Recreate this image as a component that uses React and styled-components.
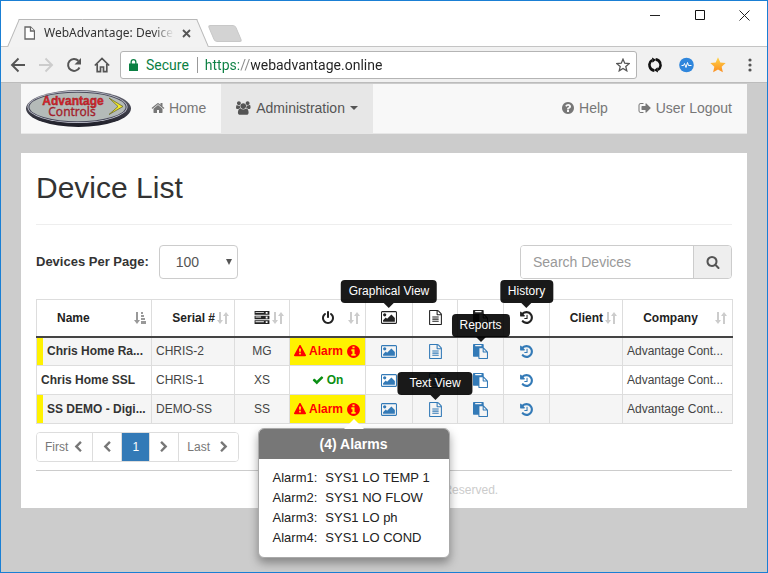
import React, { useState } from 'react';
import styled, { createGlobalStyle, css } from 'styled-components';

const linkBlue = '#337ab7';
const alarmRed = '#ff0000';
const alarmYellow = '#fff200';
const lineGrey = '#dddddd';

const GlobalStyle = createGlobalStyle`
* { box-sizing: border-box; }
body {
  margin: 0;
  background-color: #cccccc;
  color: #333333;
  font-family: "Liberation Sans", Arial, sans-serif;
  font-size: 14px;
  line-height: 20px;
}
button, input, select { font: inherit; color: inherit; }
button { cursor: pointer; }
`;

// icon outlines, [viewBox, path]
const disc = 'q0 209-103 385.5t-279.5 279.5-385.5 103-385.5-103-279.5-279.5-103-385.5 103-385.5 279.5-279.5 385.5-103 385.5 103 279.5 279.5 103 385.5z';
const icons = {
  home: ['0 0 1792 1792', 'M1472 992v480q0 26-19 45t-45 19h-384v-384h-256v384h-384q-26 0-45-19t-19-45v-480q0-1 .5-3t.5-3l575-474 575 474q1 2 1 6zm223-69l-62 74q-8 9-21 11h-3q-13 0-21-7l-692-577-692 577q-12 8-24 7-13-2-21-11l-62-74q-8-10-7-23.5t11-21.5l719-599q32-26 76-26t76 26l244 204v-195q0-14 9-23t23-9h192q14 0 23 9t9 23v408l219 182q10 8 11 21.5t-7 23.5z'],
  users: ['-64 0 1984 1792', 'M529 896q-162 5-265 128h-134q-82 0-138-40.5t-56-118.5q0-353 124-353 6 0 43.5 21t97.5 42.5 119 21.5q67 0 133-23-5 37-5 66 0 159 90 291zm1071 637q0 120-73 189.5t-194 69.5h-874q-121 0-194-69.5t-73-189.5q0-53 3.5-103.5t14-109 26.5-108.5 43-97.5 62-81 85.5-53.5 111.5-20q10 0 43 21.5t73 48 107 48 135 21.5 135-21.5 107-48 73-48 43-21.5q61 0 111.5 20t85.5 53.5 62 81 43 97.5 26.5 108.5 14 109 3.5 103.5zm-1024-1277q0 106-75 181t-181 75-181-75-75-181 75-181 181-75 181 75 75 181zm704 384q0 159-112.5 271.5t-271.5 112.5-271.5-112.5-112.5-271.5 112.5-271.5 271.5-112.5 271.5 112.5 112.5 271.5zm576 225q0 78-56 118.5t-138 40.5h-134q-103-123-265-128 90-132 90-291 0-29-5-66 66 23 133 23 59 0 119-21.5t97.5-42.5 43.5-21q124 0 124 353zm-128-609q0 106-75 181t-181 75-181-75-75-181 75-181 181-75 181 75 75 181z'],
  help: ['0 0 1792 1792', `M1024 1376v-192q0-14-9-23t-23-9h-192q-14 0-23 9t-9 23v192q0 14 9 23t23 9h192q14 0 23-9t9-23zm256-672q0-88-55.5-163t-138.5-116-170-41q-243 0-371 213-15 24 8 42l132 100q7 6 19 6 16 0 25-12 53-68 86-92 34-24 86-24 48 0 85.5 26t37.5 59q0 38-20 61t-68 45q-63 28-115.5 86.5t-52.5 125.5v36q0 14 9 23t23 9h192q14 0 23-9t9-23q0-19 21.5-49.5t54.5-49.5q32-18 49-28.5t46-35 44.5-48 28-60.5 12.5-81zm384 192${disc}`],
  info: ['0 0 1792 1792', `M1152 1376v-160q0-14-9-23t-23-9h-96v-512q0-14-9-23t-23-9h-320q-14 0-23 9t-9 23v160q0 14 9 23t23 9h96v320h-96q-14 0-23 9t-9 23v160q0 14 9 23t23 9h448q14 0 23-9t9-23zm-128-896v-160q0-14-9-23t-23-9h-192q-14 0-23 9t-9 23v160q0 14 9 23t23 9h192q14 0 23-9t9-23zm640 416${disc}`],
  logout: ['0 0 1792 1792', 'M704 1440q0 4 1 20t.5 26.5-3 23.5-10 19.5-20.5 6.5h-320q-119 0-203.5-84.5t-84.5-203.5v-704q0-119 84.5-203.5t203.5-84.5h320q13 0 22.5 9.5t9.5 22.5q0 4 1 20t.5 26.5-3 23.5-10 19.5-20.5 6.5h-320q-66 0-113 47t-47 113v704q0 66 47 113t113 47h312l11.5 1 11.5 3 8 5.5 7 9 2 13.5zm928-544q0 26-19 45l-544 544q-19 19-45 19t-45-19-19-45v-288h-448q-26 0-45-19t-19-45v-384q0-26 19-45t45-19h448v-288q0-26 19-45t45-19 45 19l544 544q19 19 19 45z'],
  power: ['0 0 1792 1792', 'M1664 896q0 156-61 298t-164 245-245 164-298 61-298-61-245-164-164-245-61-298q0-182 80.5-343t226.5-270q43-32 95.5-25t83.5 50q32 42 24.5 94.5t-49.5 84.5q-98 74-151.5 181t-53.5 228q0 104 40.5 198.5t109.5 163.5 163.5 109.5 198.5 40.5 198.5-40.5 163.5-109.5 109.5-163.5 40.5-198.5q0-121-53.5-228t-151.5-181q-42-32-49.5-84.5t24.5-94.5q31-43 84-50t95 25q146 109 226.5 270t80.5 343zm-640-768v640q0 52-38 90t-90 38-90-38-38-90v-640q0-52 38-90t90-38 90 38 38 90z'],
  picture: ['-32 0 1984 1792', 'M576 576q0 80-56 136t-136 56-136-56-56-136 56-136 136-56 136 56 56 136zm1024 384v448h-1408v-192l320-320 160 160 512-512zm96-704h-1600q-13 0-22.5 9.5t-9.5 22.5v1216q0 13 9.5 22.5t22.5 9.5h1600q13 0 22.5-9.5t9.5-22.5v-1216q0-13-9.5-22.5t-22.5-9.5zm160 32v1216q0 66-47 113t-113 47h-1600q-66 0-113-47t-47-113v-1216q0-66 47-113t113-47h1600q66 0 113 47t47 113z'],
  text: ['0 0 1792 1792', 'M1596 380q28 28 48 76t20 88v1152q0 40-28 68t-68 28h-1344q-40 0-68-28t-28-68v-1600q0-40 28-68t68-28h896q40 0 88 20t76 48zm-444-244v376h376q-10-29-22-41l-313-313q-12-12-41-22zm384 1528v-1024h-416q-40 0-68-28t-28-68v-416h-768v1536h1280zm-1024-864q0-14 9-23t23-9h704q14 0 23 9t9 23v64q0 14-9 23t-23 9h-704q-14 0-23-9t-9-23v-64zm736 224q14 0 23 9t9 23v64q0 14-9 23t-23 9h-704q-14 0-23-9t-9-23v-64q0-14 9-23t23-9h704zm0 256q14 0 23 9t9 23v64q0 14-9 23t-23 9h-704q-14 0-23-9t-9-23v-64q0-14 9-23t23-9h704z'],
  paste: ['0 0 1792 1792', 'M768 1664h896v-640h-416q-40 0-68-28t-28-68v-416h-384v1152zm256-1440v-64q0-13-9.5-22.5t-22.5-9.5h-704q-13 0-22.5 9.5t-9.5 22.5v64q0 13 9.5 22.5t22.5 9.5h704q13 0 22.5-9.5t9.5-22.5zm256 672h299l-299-299v299zm512 128v672q0 40-28 68t-68 28h-960q-40 0-68-28t-28-68v-160h-544q-40 0-68-28t-28-68v-1344q0-40 28-68t68-28h1088q40 0 68 28t28 68v328q21 13 36 28l408 408q28 28 48 76t20 88z'],
  history: ['0 0 1792 1792', 'M1664 896q0 156-61 298t-164 245-245 164-298 61q-172 0-327-72.5t-264-204.5q-7-10-6.5-22.5t8.5-20.5l137-138q10-9 25-9 16 2 23 12 73 95 179 147t225 52q104 0 198.5-40.5t163.5-109.5 109.5-163.5 40.5-198.5-40.5-198.5-109.5-163.5-163.5-109.5-198.5-40.5q-98 0-188 35.5t-160 101.5l137 138q31 30 14 69-17 40-59 40h-448q-26 0-45-19t-19-45v-448q0-42 40-59 39-17 69 14l130 129q107-101 244.5-156.5t284.5-55.5q156 0 298 61t245 164 164 245 61 298zm-640-288v448q0 14-9 23t-23 9h-320q-14 0-23-9t-9-23v-64q0-14 9-23t23-9h224v-352q0-14 9-23t23-9h64q14 0 23 9t9 23z'],
  warning: ['0 0 1792 1792', 'M1024 1375v-190q0-14-9.5-23.5t-22.5-9.5h-192q-13 0-22.5 9.5t-9.5 23.5v190q0 14 9.5 23.5t22.5 9.5h192q13 0 22.5-9.5t9.5-23.5zm-2-374l18-459q0-12-10-19-13-11-24-11h-220q-11 0-24 11-10 7-10 21l17 457q0 10 10 16.5t24 6.5h185q14 0 23.5-6.5t10.5-16.5zm-14-934l768 1408q35 63-2 126-17 29-46.5 46t-63.5 17h-1536q-34 0-63.5-17t-46.5-46q-37-63-2-126l768-1408q17-31 47-49t65-18 65 18 47 49z'],
  check: ['0 0 1792 1792', 'M1671 566q0 40-28 68l-724 724-136 136q-28 28-68 28t-68-28l-136-136-362-362q-28-28-28-68t28-68l136-136q28-28 68-28t68 28l294 295 656-657q28-28 68-28t68 28l136 136q28 28 28 68z'],
  search: ['0 0 1792 1792', 'M1216 832q0-185-131.5-316.5t-316.5-131.5-316.5 131.5-131.5 316.5 131.5 316.5 316.5 131.5 316.5-131.5 131.5-316.5zm512 832q0 52-38 90t-90 38q-54 0-90-38l-343-342q-179 124-399 124-143 0-273.5-55.5t-225-150-150-225-55.5-273.5 55.5-273.5 150-225 225-150 273.5-55.5 273.5 55.5 225 150 150 225 55.5 273.5q0 220-124 399l343 343q37 37 37 90z'],
  left: ['0 0 1792 1792', 'M1427 301l-531 531 531 531q19 19 19 45t-19 45l-166 166q-19 19-45 19t-45-19l-742-742q-19-19-19-45t19-45l742-742q19-19 45-19t45 19l166 166q19 19 19 45t-19 45z'],
  right: ['0 0 1792 1792', 'M1363 877l-742 742q-19 19-45 19t-45-19l-166-166q-19-19-19-45t19-45l531-531-531-531q-19-19-19-45t19-45l166-166q19-19 45-19t45 19l742 742q19 19 19 45t-19 45z'],
  caret: ['0 0 8 4', 'M0 0h8l-4 4z'],
  drop: ['0 0 6 6', 'M0 0h6l-3 6z'],
  server: ['0 0 16 14', 'M0 0h16v4H0zM0 5h16v4H0zM0 10h16v4H0zM1 1v1h9V1zM1 6v1h6V6zM1 11v1h9v-1zM12 1v2h2V1zM12 6v2h2V6zM12 11v2h2v-2z'],
  sort: ['0 0 12 12', 'M2 0h2v8h2l-3 4-3-4h2zM8 12h2V4h2L9 0 6 4h2z'],
  sortAsc: ['0 0 12 12', 'M2 0h2v8h2l-3 4-3-4h2zM7 0h2v2H7zM7 3h3v2H7zM7 6h4v2H7zM7 9h5v3H7z'],
};

const IconSvg = styled.svg`
display: block;
flex: none;
fill: currentColor;
width: ${({ $w }) => $w}px;
height: ${({ $h }) => $h}px;
`;

function Icon({ name, w = 14, h = w }) {
  const [box, path] = icons[name];
  return (
    <IconSvg viewBox={box} $w={w} $h={h} aria-hidden="true">
      <path fillRule="evenodd" d={path} />
    </IconSvg>
  );
}

/* ---------- browser frame ---------- */

const Browser = styled.div`
min-height: 100vh;
border: 1px solid #1a7fd4;
display: flex;
flex-direction: column;
`;

const TitleBar = styled.div`
display: flex;
justify-content: space-between;
height: 46px;
background-color: white;
border-bottom: 1px solid #c4c4c4;
`;

const TabStrip = styled.div`
display: flex;
align-items: flex-end;
padding-left: 12px;
`;

const Tab = styled.div`
position: relative;
z-index: 0;
display: flex;
align-items: center;
width: 190px;
height: 28px;
margin-bottom: -1px;
padding: 0 12px 0 11px;

&::before, &::after {
  content: "";
  position: absolute;
  z-index: -1;
  top: 0;
  bottom: 0;
  width: 60%;
  background-color: #f2f2f2;
  border-top: 1px solid #b8b8b8;
}
&::before {
  left: 0;
  border-left: 1px solid #b8b8b8;
  transform: skewX(-23deg);
}
&::after {
  right: 0;
  border-right: 1px solid #b8b8b8;
  transform: skewX(23deg);
}
`;

const TabTitle = styled.span`
flex: 1;
margin: 0 8px 0 9px;
overflow: hidden;
white-space: nowrap;
font-family: "Noto Sans", sans-serif;
font-size: 12px;
mask-image: linear-gradient(to right, black 84%, transparent);
`;

const PlainButton = styled.button`
display: flex;
align-items: center;
justify-content: center;
padding: 0;
border: 0;
background: none;
`;

const NewTab = styled(PlainButton)`
width: 28px;
height: 17px;
margin: 0 0 4px 8px;
border-radius: 3px;
background-color: #d3d3d3;
border: 1px solid #c8c8c8;
transform: skewX(23deg);
`;

const WindowButtons = styled.div`
display: flex;
height: 28px;
`;

const WindowButton = styled(PlainButton)`
width: 45px;
`;

const Toolbar = styled.div`
display: flex;
align-items: center;
gap: 10px;
height: 36px;
padding: 0 9px;
background-color: #f1f1f1;
border-bottom: 1px solid #bcbcbc;
`;

const ToolGroup = styled.div`
display: flex;
align-items: center;
gap: ${({ $gap }) => $gap}px;
`;

const Omnibox = styled.div`
flex: 1;
min-width: 0;
display: flex;
align-items: center;
height: 28px;
padding: 0 6px 0 8px;
background-color: white;
border: 1px solid #b4b4b4;
border-radius: 3px;
font-family: Roboto, sans-serif;
font-size: 14px;
`;

const Secure = styled.span`
margin: 0 7px 0 8px;
padding-right: 8px;
line-height: 16px;
color: #0b8043;
border-right: 1px solid #999999;
`;

// scheme in green, separator in grey, host in black
const Address = styled.input`
flex: 1;
min-width: 0;
padding: 0;
border: 0;
outline: 0;
color: transparent;
caret-color: #222222;
background-image: linear-gradient(to right, #0b8043 0 34px, #888888 34px 46px, #222222 46px);
background-clip: text;
`;

/* ---------- page ---------- */

const Page = styled.div`
flex: 1;
padding: 1px 20px 64px;
`;

const NavBar = styled.nav`
display: flex;
align-items: stretch;
height: 50px;
background-color: #f8f8f8;
border-bottom: 1px solid #e7e7e7;
`;

const Brand = styled.a`
display: flex;
align-items: center;
padding: 0 4px 2px;
`;

const NavLink = styled.a`
display: flex;
align-items: center;
gap: ${({ $gap }) => $gap || 0}px;
padding: 0 15px 2px;
text-decoration: none;
color: ${({ $active }) => ($active ? '#555555' : '#777777')};
background-color: ${({ $active }) => ($active ? '#e7e7e7' : 'transparent')};
`;

const NavRight = styled.div`
display: flex;
margin-left: auto;
`;

const Panel = styled.main`
margin-top: 19px;
padding: 15px 15px 8px;
background-color: white;
`;

const Title = styled.h1`
margin: 0;
padding: 3px 0 19px;
font-size: 30px;
font-weight: normal;
line-height: 34px;
border-bottom: 1px solid #eeeeee;
`;

const Controls = styled.div`
display: flex;
justify-content: space-between;
padding: 20px 0;
`;

const PerPage = styled.label`
display: flex;
align-items: center;
gap: 10px;
font-size: 13px;
font-weight: bold;
`;

const SelectWrap = styled.span`
position: relative;
color: #555555;
font-size: 14px;
font-weight: normal;

svg {
  position: absolute;
  right: 6px;
  top: 14px;
  pointer-events: none;
}
`;

const Select = styled.select`
display: block;
appearance: none;
width: 79px;
height: 34px;
padding: 0 16px;
border: 1px solid #cccccc;
border-radius: 4px;
background-color: white;
`;

const SearchBox = styled.form`
display: flex;
width: 212px;
height: 34px;
border: 1px solid #cccccc;
border-radius: 4px;
overflow: hidden;
`;

const SearchInput = styled.input`
flex: 1;
min-width: 0;
padding: 0 12px;
border: 0;
outline: 0;
&::placeholder { color: #999999; }
`;

const SearchButton = styled(PlainButton)`
width: 38px;
color: #555555;
background-color: #eeeeee;
border-left: 1px solid #cccccc;
`;

const Table = styled.table`
width: 100%;
table-layout: fixed;
border-collapse: collapse;
font-size: 12px;
`;

const cell = css`
height: 29px;
padding: 0 4px;
border: 1px solid ${lineGrey};
white-space: nowrap;
line-height: 16px;
text-align: ${({ $center }) => ($center ? 'center' : 'left')};
`;

const HeadCell = styled.th`
height: 37px;
padding: 0 5px;
color: #222222;
border: 1px solid ${lineGrey};
border-bottom: 2px solid #444444;
white-space: nowrap;
`;

const HeadInner = styled.div`
display: flex;
align-items: center;
gap: 2px;
`;

const HeadLabel = styled.span`
flex: 1;
display: flex;
justify-content: ${({ $align }) => $align || 'center'};
padding-left: ${({ $indent }) => $indent || 0}px;
`;

const SortButton = styled(PlainButton)`
color: ${({ $active }) => ($active ? '#999999' : '#cccccc')};
`;

const Row = styled.tr`
background-color: ${({ $odd }) => ($odd ? '#f5f5f5' : 'white')};
`;

const NameCell = styled.td`
${cell}
font-weight: bold;
${({ $alarm }) => $alarm && css`
padding-left: 10px;
box-shadow: inset 6px 0 0 ${alarmYellow};
`}
`;

const Cell = styled.td`
${cell}
color: #444444;
`;

const StateCell = styled.td`
${cell}
font-weight: bold;
color: ${({ $alarm }) => ($alarm ? alarmRed : '#0a8f14')};
background-color: ${({ $alarm }) => ($alarm ? alarmYellow : 'transparent')};
`;

const StateInner = styled.div`
display: flex;
align-items: center;
justify-content: center;
gap: 3px;
`;

// anchor for whatever floats above or below an icon
const Anchor = styled.span`
position: relative;
display: flex;
justify-content: center;
width: max-content;
margin: ${({ $inline }) => ($inline ? '0' : '0 auto')};
`;

const IconLink = styled.a`
display: block;
color: ${linkBlue};
`;

const Tip = styled.span`
position: absolute;
z-index: 5;
bottom: calc(100% + 7px);
left: 50%;
transform: translateX(-50%);
padding: 3px 8px;
border-radius: 4px;
background-color: rgba(0, 0, 0, 0.9);
color: white;
font-size: 12px;
font-weight: normal;
line-height: 17px;
white-space: nowrap;
${({ $wide }) => $wide && 'padding: 3px 12px;'}

&::after {
  content: "";
  position: absolute;
  top: 100%;
  left: calc(50% - 5px);
  border: 5px solid transparent;
  border-bottom: 0;
  border-top-color: rgba(0, 0, 0, 0.9);
}
`;

const Popover = styled.div`
position: absolute;
z-index: 6;
top: calc(100% + 11px);
left: 50%;
transform: translateX(-50%);
width: 192px;
background-color: white;
border: 1px solid #aaaaaa;
border-radius: 6px;
box-shadow: 0 5px 10px rgba(0, 0, 0, 0.35);
color: #222222;
font-size: 13px;
font-weight: normal;

&::before {
  content: "";
  position: absolute;
  bottom: 100%;
  left: calc(50% - 10px);
  border: 10px solid transparent;
  border-top: 0;
  border-bottom-color: white;
}
`;

const PopoverTitle = styled.h2`
margin: 0;
padding: 5px 0;
border-radius: 5px 5px 0 0;
background-color: #777777;
color: white;
font-size: 14px;
line-height: 20px;
text-align: center;
`;

const AlarmList = styled.ul`
margin: 0;
padding: 9px 14px;
list-style: none;
line-height: 20px;
text-align: left;
`;

const AlarmItem = styled.li`
display: flex;
gap: 8px;
`;

const Pager = styled.div`
display: flex;
width: max-content;
margin: 8px 0;
border: 1px solid ${lineGrey};
border-radius: 4px;
overflow: hidden;
`;

const PageButton = styled(PlainButton)`
gap: ${({ $gap }) => $gap || 0}px;
min-width: 28px;
height: 28px;
padding: 0 8px;
font-size: 12px;
color: ${({ $current }) => ($current ? 'white' : '#777777')};
background-color: ${({ $current }) => ($current ? linkBlue : 'white')};

& + & { border-left: 1px solid ${({ $current }) => ($current ? linkBlue : lineGrey)}; }
`;

const Footer = styled.footer`
padding-top: 9px;
border-top: 1px solid #cccccc;
color: #cccccc;
font-size: 12px;
text-align: center;
`;

const columns = [
  { width: 115, label: 'Name', sort: 'sortAsc', align: 'flex-start', indent: 15 },
  { width: 83, label: 'Serial #', sort: 'sort', align: 'flex-end' },
  { width: 55, icon: 'server', w: 16, h: 13, sort: 'sort', align: 'flex-end', title: 'Model' },
  { width: 76, icon: 'power', sort: 'sort', indent: 14, title: 'Status' },
  { width: 47, icon: 'picture', w: 17, h: 15, tip: 'Graphical View' },
  { width: 45, icon: 'text', w: 15 },
  { width: 46, icon: 'paste', w: 15 },
  { width: 46, icon: 'history', w: 15, tip: 'History' },
  { width: 73, label: 'Client', sort: 'sort', align: 'flex-end' },
  { width: 110, label: 'Company', sort: 'sort' },
];

const devices = [
  { name: 'Chris Home Ra...', serial: 'CHRIS-2', model: 'MG', alarm: true, reportsTip: true },
  { name: 'Chris Home SSL', serial: 'CHRIS-1', model: 'XS' },
  { name: 'SS DEMO - Digi...', serial: 'DEMO-SS', model: 'SS', alarm: true, textTip: true, popover: true },
];

const alarms = ['SYS1 LO TEMP 1', 'SYS1 NO FLOW', 'SYS1 LO ph', 'SYS1 LO COND'];

function Logo() {
  return (
    <svg width="107" height="40" viewBox="0 0 107 40" role="img" aria-label="Advantage Controls">
      <defs>
        <linearGradient id="rim" x1="0" y1="0" x2="0" y2="1">
          <stop offset="0" stopColor="#6b6c78" />
          <stop offset="1" stopColor="#1c1c26" />
        </linearGradient>
      </defs>
      <ellipse cx="53.500" cy="20.500" rx="52.500" ry="18.500" fill="url(#rim)" />
      <ellipse cx="52.500" cy="19" rx="50" ry="16" fill="#d4d5e0" />
      <ellipse cx="52.500" cy="19" rx="49.200" ry="15.300" fill="#4a4b5c" />
      <ellipse cx="52.500" cy="19" rx="48" ry="14.300" fill="#b4bab8" />
      <path d="M84 10l14 8.500-14 8 9-8z" fill="#f4ea2a" stroke="#6b6a2c" strokeWidth="0.8" />
      <text x="48" y="17" textAnchor="middle" fontSize="12" fontWeight="bold" fill="#e0242c" stroke="#8d1c22" strokeWidth="0.4">Advantage</text>
      <text x="47" y="28" textAnchor="middle" fontFamily="Noto Sans, sans-serif" fontSize="12" fill="#a3202a" stroke="#a3202a" strokeWidth="0.3">Controls</text>
    </svg>
  );
}

function BrowserFrame({ children }) {
  return (
    <Browser>
      <TitleBar>
        <TabStrip>
          <Tab>
            <svg width="11" height="14" viewBox="0 0 11 14" fill="white" stroke="#666" strokeWidth="1.3">
              <path d="M1 1h5.500l4 4v8H1z" />
              <path d="M6.500 1v4h4" />
            </svg>
            <TabTitle>WebAdvantage: Device List</TabTitle>
            <PlainButton aria-label="Close tab">
              <svg width="9" height="9" viewBox="0 0 9 9" stroke="#555" strokeWidth="1.800"><path d="M1 1l7 7M8 1l-7 7" /></svg>
            </PlainButton>
          </Tab>
          <NewTab aria-label="New tab" />
        </TabStrip>
        <WindowButtons>
          <WindowButton aria-label="Minimize">
            <svg width="10" height="10" viewBox="0 0 10 10" stroke="#222"><path d="M0 5.500h10" /></svg>
          </WindowButton>
          <WindowButton aria-label="Maximize">
            <svg width="10" height="10" viewBox="0 0 10 10" fill="none" stroke="#111"><path d="M.5.5h9v9h-9z" /></svg>
          </WindowButton>
          <WindowButton aria-label="Close">
            <svg width="11" height="11" viewBox="0 0 11 11" stroke="#222"><path d="M.5.5l10 10M10.500.5l-10 10" /></svg>
          </WindowButton>
        </WindowButtons>
      </TitleBar>
      <Toolbar>
        <ToolGroup $gap={12}>
          <PlainButton aria-label="Back">
            <svg width="16" height="16" viewBox="0 0 16 16" fill="none" stroke="#555" strokeWidth="1.900"><path d="M15 8H2M8.500 1.500L2 8l6.500 6.500" /></svg>
          </PlainButton>
          <PlainButton aria-label="Forward">
            <svg width="16" height="16" viewBox="0 0 16 16" fill="none" stroke="#ccc" strokeWidth="1.900"><path d="M1 8h13M7.500 1.500L14 8l-6.500 6.500" /></svg>
          </PlainButton>
          <PlainButton aria-label="Reload">
            <svg width="16" height="16" viewBox="0 0 16 16" fill="none" stroke="#555" strokeWidth="2">
              <path d="M13.500 10.500A6 6 0 1 1 12.400 3.700" />
              <path d="M15 1v6.500H8.500z" fill="#555" stroke="none" />
            </svg>
          </PlainButton>
          <PlainButton aria-label="Home">
            <svg width="16" height="16" viewBox="0 0 16 16" fill="none" stroke="#555" strokeWidth="1.700"><path d="M.8 8.500L8 1.500l7.200 7M3.200 7v7.600h3.300V10h3v4.600h3.300V7" /></svg>
          </PlainButton>
        </ToolGroup>
        <Omnibox>
          <svg width="9" height="12" viewBox="0 0 9 12" fill="#0b8043"><path d="M0 4.500h9V12H0zM1.500 5V3a3 3 0 0 1 6 0v2H6.200V3a1.700 1.700 0 0 0-3.400 0v2z" /></svg>
          <Secure>Secure</Secure>
          <Address aria-label="Address" defaultValue="https://webadvantage.online" />
          <PlainButton aria-label="Bookmark">
            <svg width="14" height="14" viewBox="0 0 24 24" fill="none" stroke="#555" strokeWidth="2.200"><path d="M12 2l3 7 7.500.7-5.700 5 1.700 7.300L12 18l-6.500 4 1.700-7.300-5.700-5L9 9z" /></svg>
          </PlainButton>
        </Omnibox>
        <ToolGroup $gap={16}>
          <PlainButton aria-label="Sync">
            <svg width="16" height="16" viewBox="0 0 16 16" fill="none" stroke="#111" strokeWidth="2.600">
              <path d="M4.200 12.200A5.600 5.600 0 0 1 5.200 3.200M8.600 2.400A5.600 5.600 0 0 1 13.300 6.400M11.800 3.800A5.600 5.600 0 0 1 10.800 12.800M7.400 13.600A5.600 5.600 0 0 1 2.700 9.600" />
              <path d="M5 .5l4 2.300-3.500 3zM11 15.500l-4-2.300 3.500-3z" fill="#111" stroke="none" />
            </svg>
          </PlainButton>
          <PlainButton aria-label="Monitor">
            <svg width="15" height="16" viewBox="0 0 15 16">
              <circle cx="7.500" cy="8" r="7.300" fill="#2f86dc" />
              <path d="M2.500 8.500h2l1-2 1.500 4 1.500-5 1 3h3" fill="none" stroke="white" strokeWidth="1" />
            </svg>
          </PlainButton>
          <PlainButton aria-label="Favourites">
            <svg width="16" height="16" viewBox="0 0 24 24">
              <defs>
                <linearGradient id="gold" x1="0" y1="0" x2="0" y2="1">
                  <stop offset="0" stopColor="#ffd54a" />
                  <stop offset="1" stopColor="#fb8c1e" />
                </linearGradient>
              </defs>
              <path d="M12 .5l3.500 7.700 8 .8-6 5.600 1.800 8.400L12 18.700 4.700 23l1.800-8.400-6-5.600 8-.8z" fill="url(#gold)" />
            </svg>
          </PlainButton>
          <PlainButton aria-label="Menu">
            <svg width="16" height="14" viewBox="0 0 16 14" fill="#555"><circle cx="8" cy="2" r="1.600" /><circle cx="8" cy="7" r="1.600" /><circle cx="8" cy="12" r="1.600" /></svg>
          </PlainButton>
        </ToolGroup>
      </Toolbar>
      {children}
    </Browser>
  );
}

function AlarmPopover() {
  return (
    <Popover role="dialog" aria-label="Alarms">
      <PopoverTitle>({alarms.length}) Alarms</PopoverTitle>
      <AlarmList>
        {alarms.map((text, i) => (
          <AlarmItem key={text}><span>Alarm{i + 1}:</span><span>{text}</span></AlarmItem>
        ))}
      </AlarmList>
    </Popover>
  );
}

function ViewCell({ icon, w = 15, h = w, label, tip, wide }) {
  return (
    <Cell $center>
      <Anchor>
        <IconLink href="#" aria-label={label}><Icon name={icon} w={w} h={h} /></IconLink>
        {tip && <Tip $wide={wide}>{label}</Tip>}
      </Anchor>
    </Cell>
  );
}

function DeviceRow({ device, odd }) {
  return (
    <Row $odd={odd}>
      <NameCell $alarm={device.alarm}>{device.name}</NameCell>
      <Cell>{device.serial}</Cell>
      <Cell $center>{device.model}</Cell>
      <StateCell $alarm={device.alarm}>
        <StateInner>
          <Icon name={device.alarm ? 'warning' : 'check'} w={12} />
          {device.alarm ? 'Alarm' : 'On'}
          {device.alarm && (
            <Anchor $inline>
              <Icon name="info" w={15} />
              {device.popover && <AlarmPopover />}
            </Anchor>
          )}
        </StateInner>
      </StateCell>
      <ViewCell icon="picture" w={17} h={15} label="Graphical View" />
      <ViewCell icon="text" label="Text View" tip={device.textTip} wide />
      <ViewCell icon="paste" label="Reports" tip={device.reportsTip} />
      <ViewCell icon="history" label="History" />
      <Cell />
      <Cell>Advantage Cont...</Cell>
    </Row>
  );
}

export default function App() {
  const [perPage, setPerPage] = useState('100');
  const [query, setQuery] = useState('');

  return (
    <>
      <GlobalStyle />
      <BrowserFrame>
        <Page>
          <NavBar>
            <Brand href="#"><Logo /></Brand>
            <NavLink href="#"><Icon name="home" />&nbsp;Home</NavLink>
            <NavLink href="#" $active $gap={5}><Icon name="users" w={15} h={14} />Administration<Icon name="caret" w={8} h={4} /></NavLink>
            <NavRight>
              <NavLink href="#"><Icon name="help" />&nbsp;Help</NavLink>
              <NavLink href="#"><Icon name="logout" />&nbsp;User Logout</NavLink>
            </NavRight>
          </NavBar>
          <Panel>
            <Title>Device List</Title>
            <Controls>
              <PerPage>
                Devices Per Page:
                <SelectWrap>
                  <Select value={perPage} onChange={(e) => setPerPage(e.target.value)}>
                    <option>25</option>
                    <option>50</option>
                    <option>100</option>
                  </Select>
                  <Icon name="drop" w={6} h={6} />
                </SelectWrap>
              </PerPage>
              <SearchBox onSubmit={(e) => e.preventDefault()}>
                <SearchInput
                  aria-label="Search Devices"
                  placeholder="Search Devices"
                  value={query}
                  onChange={(e) => setQuery(e.target.value)}
                />
                <SearchButton aria-label="Search"><Icon name="search" /></SearchButton>
              </SearchBox>
            </Controls>
            <Table>
              <colgroup>
                {columns.map((c, i) => <col key={i} style={{ width: c.width }} />)}
              </colgroup>
              <thead>
                <tr>
                  {columns.map((c, i) => (
                    <HeadCell key={i}>
                      <HeadInner>
                        <HeadLabel $align={c.align} $indent={c.indent}>
                          {c.label || (
                            <Anchor $inline>
                              <Icon name={c.icon} w={c.w} h={c.h} />
                              {c.tip && <Tip>{c.tip}</Tip>}
                            </Anchor>
                          )}
                        </HeadLabel>
                        {c.sort && (
                          <SortButton $active={c.sort === 'sortAsc'} aria-label={`Sort by ${c.label || c.title}`}>
                            <Icon name={c.sort} w={12} />
                          </SortButton>
                        )}
                      </HeadInner>
                    </HeadCell>
                  ))}
                </tr>
              </thead>
              <tbody>
                {devices.map((d, i) => <DeviceRow key={d.serial} device={d} odd={i % 2 === 0} />)}
              </tbody>
            </Table>
            <Pager>
              <PageButton $gap={4}>First <Icon name="left" w={12} /></PageButton>
              <PageButton aria-label="Previous"><Icon name="left" w={12} /></PageButton>
              <PageButton $current>1</PageButton>
              <PageButton aria-label="Next"><Icon name="right" w={12} /></PageButton>
              <PageButton $gap={8}>Last <Icon name="right" w={12} /></PageButton>
            </Pager>
            <Footer>© Advantage Controls All Rights Reserved.</Footer>
          </Panel>
        </Page>
      </BrowserFrame>
    </>
  );
}
